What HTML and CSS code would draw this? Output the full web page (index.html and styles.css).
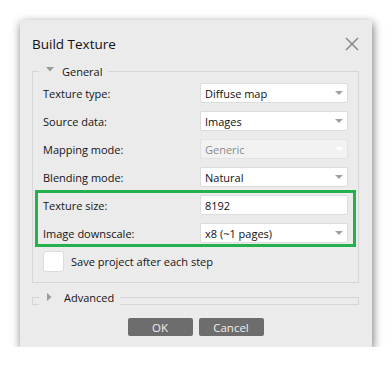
FILE: index.html
```html
<!DOCTYPE html>
<html>
<head>
<meta charset="utf-8">
<link rel="stylesheet" href="styles.css">
</head>
<body>
<div class="dialog">
  <div class="titlebar">
    <div class="title">Build Texture</div>
    <svg class="close" width="14" height="14" viewBox="0 0 14 14"><path d="M1 1L13 13M13 1L1 13" stroke="#8c8c8c" stroke-width="1.6" fill="none"/></svg>
  </div>
  <div class="group">
    <div class="group-head">
      <svg class="tri" width="8" height="5" viewBox="0 0 8 5"><path d="M0 0H8L4 4.5Z" fill="#9a9a9a"/></svg>
      <span>General</span>
    </div>
    <div class="group-body">
      <div class="row"><span class="label">Texture type:</span><div class="combo"><span>Diffuse map</span><i class="arrow"></i></div></div>
      <div class="row"><span class="label">Source data:</span><div class="combo"><span>Images</span><i class="arrow"></i></div></div>
      <div class="row"><span class="label">Mapping mode:</span><div class="combo disabled"><span>Generic</span><i class="arrow"></i></div></div>
      <div class="row"><span class="label">Blending mode:</span><div class="combo"><span>Natural</span><i class="arrow"></i></div></div>
      <div class="highlight">
        <div class="row"><span class="label">Texture size:</span><div class="combo"><span>8192</span></div></div>
        <div class="row"><span class="label">Image downscale:</span><div class="combo"><span>x8 (~1 pages)</span><i class="arrow"></i></div></div>
      </div>
      <div class="check-row"><span class="checkbox"></span><span>Save project after each step</span></div>
    </div>
  </div>
  <div class="group collapsed">
    <div class="group-head">
      <svg class="tri-r" width="5" height="8" viewBox="0 0 5 8"><path d="M0 0V8L4.5 4Z" fill="#9a9a9a"/></svg>
      <span>Advanced</span>
    </div>
  </div>
  <div class="buttons">
    <div class="btn">OK</div>
    <div class="btn">Cancel</div>
  </div>
</div>
</body>
</html>
```
FILE: styles.css
```css
html, body {
  margin: 0;
  padding: 0;
  background: #ffffff;
}
body {
  font-family: "Open Sans", "Noto Sans", sans-serif;
  font-size: 11px;
  color: #141414;
}
.dialog {
  margin: 20px 0 0 20px;
  width: 352px;
  height: 327px;
  background: #ebebeb;
  box-shadow: 1px 3px 9px rgba(0, 0, 0, 0.55);
  box-sizing: border-box;
  padding: 0 13px 0 12px;
  display: flex;
  flex-direction: column;
}
.titlebar {
  height: 46px;
  display: flex;
  align-items: center;
  justify-content: space-between;
  flex-shrink: 0;
}
.title {
  font-size: 13.5px;
  color: #111;
  padding-top: 1px;
}
.close {
  margin-top: 1px;
}
.group {
  border: 1px solid #d6d6d6;
  margin-top: 5px;
  flex-shrink: 0;
}
.group-head {
  margin-top: -9px;
  margin-left: 6px;
  height: 16px;
  width: fit-content;
  display: flex;
  align-items: center;
  background: #ebebeb;
  padding: 0 6px 0 7px;
}
.group-head .tri {
  margin-right: 8px;
  margin-top: -4px;
}
.group-head .tri-r {
  margin-left: 1px;
  margin-right: 12px;
}
.group-body {
  padding: 4px 10px 10px 10px;
  display: flex;
  flex-direction: column;
  gap: 8px;
}
.row {
  display: flex;
  align-items: center;
  justify-content: space-between;
  height: 20px;
}
.combo {
  width: 148px;
  height: 20px;
  box-sizing: border-box;
  background: #fff;
  border: 1px solid #dcdcdc;
  border-radius: 2px;
  display: flex;
  align-items: center;
  justify-content: space-between;
  padding: 0 4px 0 4px;
  color: #111;
}
.combo.disabled {
  background: #f2f2f2;
  color: #8a8a8a;
  border-color: #e2e2e2;
}
.arrow {
  width: 0;
  height: 0;
  border-left: 4px solid transparent;
  border-right: 4px solid transparent;
  border-top: 4px solid #a0a0a0;
}
.combo.disabled .arrow {
  border-top-color: #ffffff;
}
.highlight {
  border: 3px solid #22b14c;
  margin: -5px -8px -4px -8px;
  padding: 2px 5px 1px 5px;
  display: flex;
  flex-direction: column;
  gap: 8px;
}
.check-row {
  display: flex;
  align-items: center;
  margin-top: -1px;
  height: 22px;
}
.checkbox {
  width: 21px;
  height: 21px;
  box-sizing: border-box;
  background: #fff;
  border: 1px solid #dcdcdc;
  border-radius: 3px;
  margin-right: 7px;
}
.collapsed {
  margin-top: 14px;
  height: 8px;
  box-sizing: border-box;
}
.buttons {
  margin-top: 13px;
  display: flex;
  justify-content: center;
  gap: 6px;
}
.btn {
  width: 65px;
  height: 18px;
  background: #6d6d6d;
  color: #efefef;
  border-radius: 2px;
  display: flex;
  align-items: center;
  justify-content: center;
  font-size: 11.5px;
}
```
